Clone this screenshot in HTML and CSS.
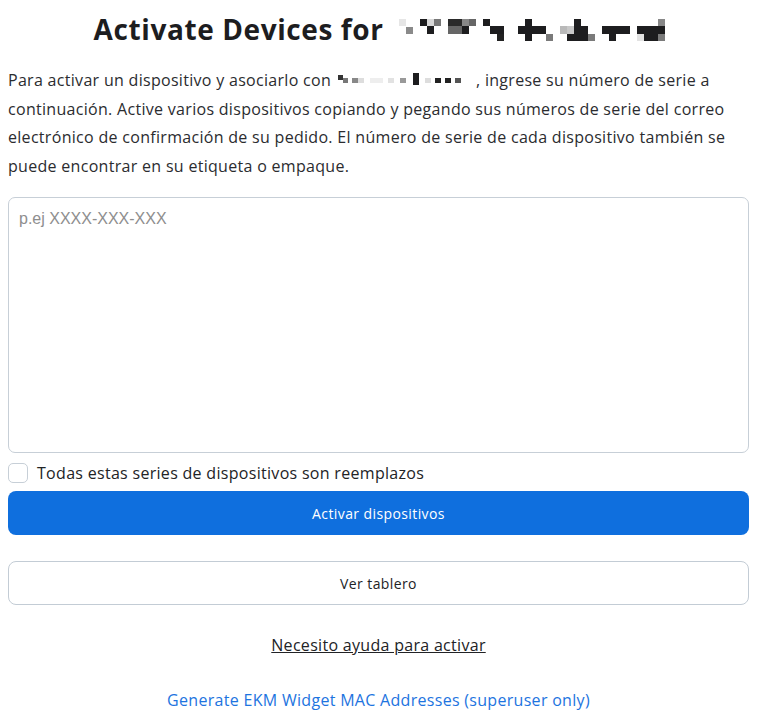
FILE: index.html
```html
<!DOCTYPE html>
<html lang="es">
<head>
    <meta charset="UTF-8">
    <meta name="viewport" content="width=device-width, initial-scale=1.0">
    <title>Activate Devices</title>
    <link rel="stylesheet" href="styles.css">
</head>
<body>
    <div class="activate-page">
        <h1 class="activate-title">
            Activate Devices for
            <svg class="org-mask org-mask-title" width="270" height="24" viewBox="0 0 270 24">
                <rect x="0" y="1" width="7" height="7" fill="#e6e6e6"/>
                <rect x="7" y="9" width="7" height="7" fill="#8a8a8a"/>
                <rect x="21" y="1" width="7" height="7" fill="#1d1d1f"/>
                <rect x="28" y="1" width="7" height="7" fill="#d8d8d8"/>
                <rect x="35" y="1" width="7" height="7" fill="#777"/>
                <rect x="28" y="8" width="7" height="8" fill="#1d1d1f"/>
                <rect x="49" y="1" width="14" height="7" fill="#2a2a2a"/>
                <rect x="63" y="1" width="7" height="7" fill="#888"/>
                <rect x="70" y="1" width="7" height="7" fill="#666"/>
                <rect x="49" y="8" width="14" height="8" fill="#666"/>
                <rect x="63" y="8" width="7" height="8" fill="#1d1d1f"/>
                <rect x="84" y="1" width="7" height="7" fill="#1d1d1f"/>
                <rect x="91" y="8" width="14" height="8" fill="#1d1d1f"/>
                <rect x="98" y="16" width="7" height="7" fill="#222"/>
                <rect x="126" y="1" width="7" height="7" fill="#1d1d1f"/>
                <rect x="119" y="8" width="28" height="8" fill="#1d1d1f"/>
                <rect x="126" y="16" width="7" height="7" fill="#1d1d1f"/>
                <rect x="147" y="16" width="7" height="7" fill="#7a7a7a"/>
                <rect x="161" y="8" width="7" height="8" fill="#b9b9b9"/>
                <rect x="168" y="8" width="7" height="8" fill="#c8c8c8"/>
                <rect x="175" y="1" width="7" height="7" fill="#1d1d1f"/>
                <rect x="168" y="16" width="21" height="7" fill="#1d1d1f"/>
                <rect x="175" y="8" width="14" height="8" fill="#1d1d1f"/>
                <rect x="189" y="16" width="7" height="7" fill="#7a7a7a"/>
                <rect x="203" y="8" width="28" height="8" fill="#1d1d1f"/>
                <rect x="210" y="16" width="7" height="7" fill="#1d1d1f"/>
                <rect x="238" y="8" width="28" height="8" fill="#1d1d1f"/>
                <rect x="238" y="16" width="7" height="7" fill="#e2e2e2"/>
                <rect x="245" y="16" width="14" height="7" fill="#1d1d1f"/>
                <rect x="259" y="1" width="7" height="7" fill="#888"/>
                <rect x="259" y="16" width="7" height="7" fill="#7a7a7a"/>
            </svg>
        </h1>

        <p class="activate-intro">
            Para activar un dispositivo y asociarlo con
            <svg class="org-mask org-mask-inline" width="130" height="16" viewBox="0 0 130 16">
                <rect x="0" y="3" width="5" height="5" fill="#333"/>
                <rect x="5" y="6" width="5" height="5" fill="#777"/>
                <rect x="14" y="6" width="6" height="5" fill="#888"/>
                <rect x="20" y="6" width="6" height="5" fill="#ddd"/>
                <rect x="32" y="6" width="13" height="5" fill="#eee"/>
                <rect x="50" y="6" width="6" height="5" fill="#e2e2e2"/>
                <rect x="62" y="6" width="6" height="5" fill="#999"/>
                <rect x="75" y="1" width="6" height="12" fill="#1d1d1f"/>
                <rect x="87" y="6" width="6" height="5" fill="#ddd"/>
                <rect x="97" y="6" width="6" height="5" fill="#222"/>
                <rect x="107" y="6" width="6" height="5" fill="#222"/>
                <rect x="117" y="6" width="6" height="5" fill="#555"/>
            </svg>
            , ingrese su número de serie a continuación. Active varios dispositivos copiando y pegando sus números de serie del correo electrónico de confirmación de su pedido. El número de serie de cada dispositivo también se puede encontrar en su etiqueta o empaque.
        </p>

        <form class="activate-form">
            <textarea class="serial-input" placeholder="p.ej XXXX-XXX-XXX"></textarea>

            <label class="replace-check">
                <input type="checkbox">
                <span class="check-box"></span>
                Todas estas series de dispositivos son reemplazos
            </label>

            <button type="submit" class="btn btn-primary">Activar dispositivos</button>
            <button type="button" class="btn btn-outline">Ver tablero</button>
        </form>

        <div class="help-links">
            <a href="#" class="help-link">Necesito ayuda para activar</a>
            <a href="#" class="mac-link">Generate EKM Widget MAC Addresses (superuser only)</a>
        </div>
    </div>
</body>
</html>
```

FILE: styles.css
```css
* {
    margin: 0;
    padding: 0;
    box-sizing: border-box;
}

body {
    font-family: 'Open Sans', 'Noto Sans', sans-serif;
    letter-spacing: 0.3px;
    color: #222326;
    background-color: #ffffff;
}

.activate-page {
    padding: 11px 8px 0;
}

.activate-title {
    padding-left: 6px;
    font-size: 28px;
    line-height: 36px;
    font-weight: 700;
    letter-spacing: 0.6px;
    text-align: center;
    color: #1d1d1f;
}

.org-mask {
    display: inline-block;
}

.org-mask-title {
    vertical-align: -2px;
    margin-left: 8px;
}

.org-mask-inline {
    vertical-align: -2px;
    margin: 0 4px 0 2px;
}

.activate-intro {
    margin-top: 19px;
    font-size: 16px;
    line-height: 28.5px;
    color: #2b2c2f;
}

.activate-form {
    margin-top: 17px;
    display: flex;
    flex-direction: column;
}

.serial-input {
    height: 256px;
    width: 100%;
    resize: none;
    padding: 12px 10px;
    border: 1px solid #c7cfd7;
    border-radius: 7px;
    font-family: 'Liberation Sans', Arial, sans-serif;
    font-size: 16px;
    letter-spacing: 0;
    color: #222;
    outline: none;
}

.serial-input::placeholder {
    color: #8e8e8e;
}

.replace-check {
    margin-top: 10px;
    display: flex;
    align-items: center;
    gap: 9px;
    font-size: 16px;
    line-height: 20px;
    color: #222326;
    cursor: pointer;
}

.replace-check input {
    display: none;
}

.check-box {
    width: 20px;
    height: 20px;
    border: 1px solid #c7cfd7;
    border-radius: 5px;
    background-color: #ffffff;
}

.btn {
    width: 100%;
    height: 44px;
    border-radius: 8px;
    font-family: 'Open Sans', 'Noto Sans', sans-serif;
    font-size: 14px;
    letter-spacing: 0.4px;
    cursor: pointer;
}

.btn-primary {
    margin-top: 8px;
    background-color: #0f6fde;
    border: none;
    color: #ffffff;
}

.btn-outline {
    margin-top: 26px;
    background-color: #ffffff;
    border: 1px solid #c3ccd5;
    color: #222326;
}

.help-links {
    display: flex;
    flex-direction: column;
    align-items: center;
    font-size: 16px;
    line-height: 24px;
}

.help-link {
    margin-top: 28px;
    color: #222326;
    text-decoration: underline;
}

.mac-link {
    margin-top: 31px;
    color: #1d74e0;
    text-decoration: none;
}
```
